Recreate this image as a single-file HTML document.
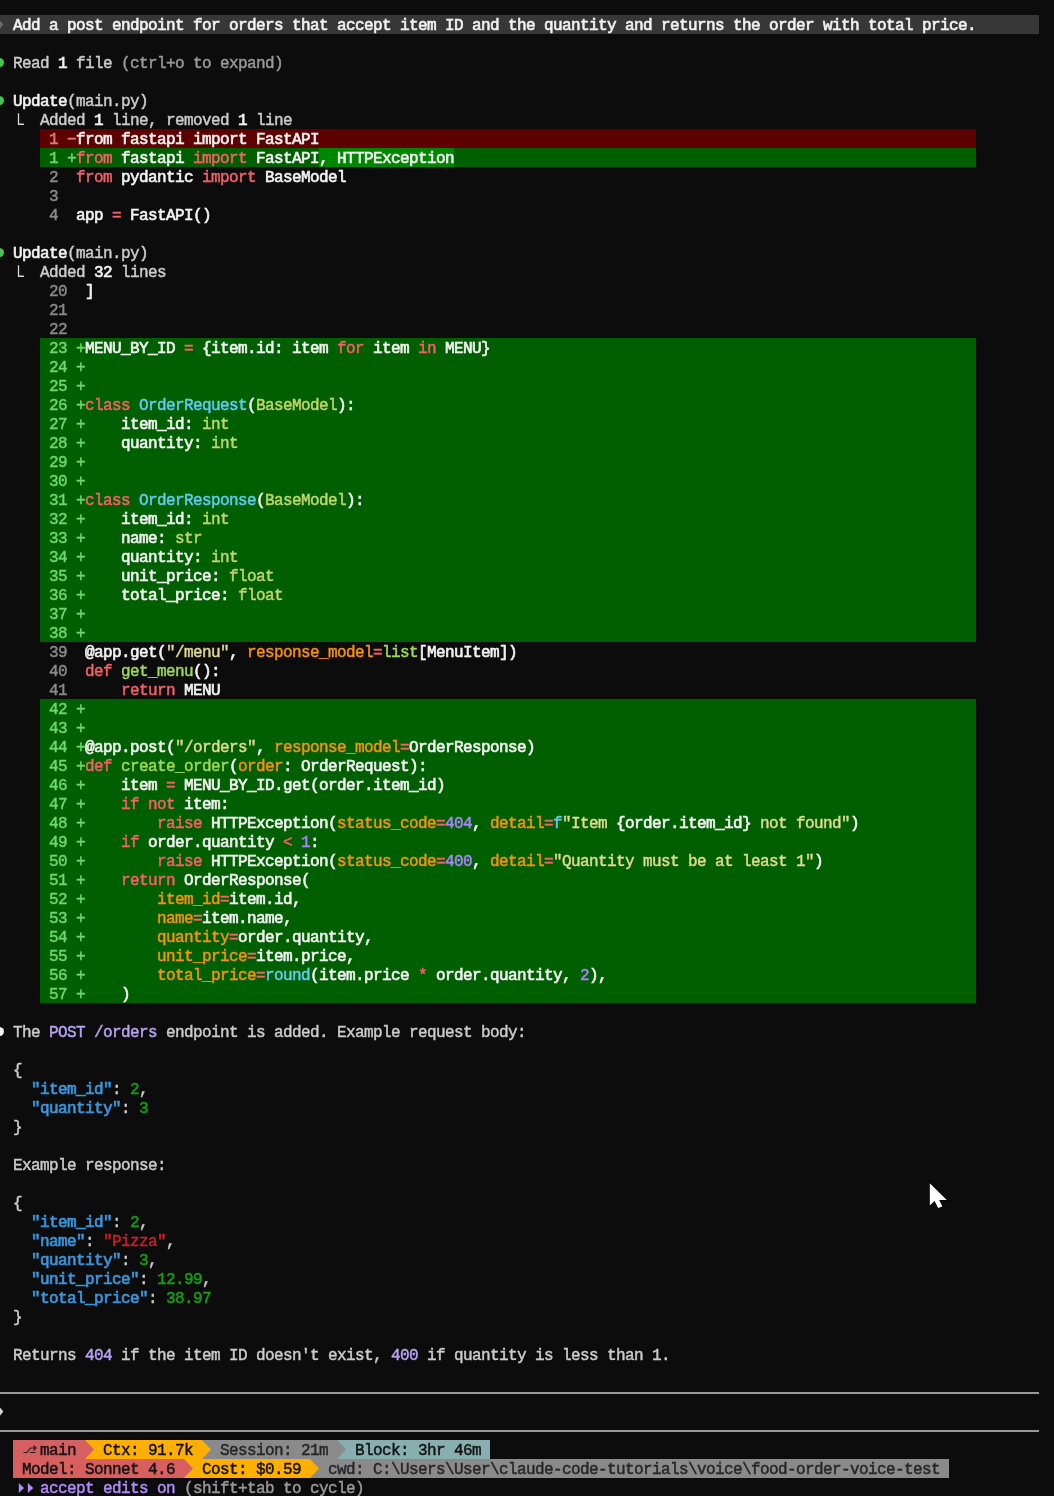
<!DOCTYPE html><html><head><meta charset="utf-8"><title>terminal</title><style>

html,body{margin:0;padding:0;background:#0c0c0c;}
body{width:1054px;height:1496px;position:relative;overflow:hidden;font-family:"Liberation Mono",monospace;font-size:16px;letter-spacing:-0.6016px;color:#cccccc;-webkit-text-stroke:0.45px;}
.a{position:absolute;display:block}
.r{position:absolute;left:-5px;height:19px;line-height:19px;padding-top:2px;will-change:transform;white-space:pre;font-kerning:none;font-variant-ligatures:none}
.b{position:absolute;height:19px}
.w{color:#f2f2f2;-webkit-text-stroke:0.65px}
.hw{color:#f2f2f2;-webkit-text-stroke:0.65px}
.g{color:#999999}
.ln{color:#8a8a8a}
.lg{color:#6bd86b}
.lr{color:#e07a7a}
.k{color:#f8606a}
.c{color:#5fcdf5}
.gr{color:#c0d66c}
.fn{color:#a0d85a}
.s{color:#e0da92}
.o{color:#f8930f}
.p{color:#ae81ff}
.ic{color:#b8a4f4}
.jk{color:#3a96dd;-webkit-text-stroke:0.7px}
.jn{color:#13a10e}
.js{color:#d01f2a}
.sb{color:#121212}
.sb2{color:#262626}
.ae{color:#b18cfa}

</style></head><body>
<div class="b" style="left:0px;top:15px;width:1039px;background:#373737"></div>
<div class="b" style="left:40px;top:129px;width:936px;background:#5f0000"></div>
<div class="b" style="left:40px;top:148px;width:936px;background:#005f00"></div>
<div class="b" style="left:319px;top:148px;width:135px;background:#008700"></div>
<div class="b" style="left:40px;top:338px;width:936px;background:#005f00"></div>
<div class="b" style="left:40px;top:357px;width:936px;background:#005f00"></div>
<div class="b" style="left:40px;top:376px;width:936px;background:#005f00"></div>
<div class="b" style="left:40px;top:395px;width:936px;background:#005f00"></div>
<div class="b" style="left:40px;top:414px;width:936px;background:#005f00"></div>
<div class="b" style="left:40px;top:433px;width:936px;background:#005f00"></div>
<div class="b" style="left:40px;top:452px;width:936px;background:#005f00"></div>
<div class="b" style="left:40px;top:471px;width:936px;background:#005f00"></div>
<div class="b" style="left:40px;top:490px;width:936px;background:#005f00"></div>
<div class="b" style="left:40px;top:509px;width:936px;background:#005f00"></div>
<div class="b" style="left:40px;top:528px;width:936px;background:#005f00"></div>
<div class="b" style="left:40px;top:547px;width:936px;background:#005f00"></div>
<div class="b" style="left:40px;top:566px;width:936px;background:#005f00"></div>
<div class="b" style="left:40px;top:585px;width:936px;background:#005f00"></div>
<div class="b" style="left:40px;top:604px;width:936px;background:#005f00"></div>
<div class="b" style="left:40px;top:623px;width:936px;background:#005f00"></div>
<div class="b" style="left:40px;top:699px;width:936px;background:#005f00"></div>
<div class="b" style="left:40px;top:718px;width:936px;background:#005f00"></div>
<div class="b" style="left:40px;top:737px;width:936px;background:#005f00"></div>
<div class="b" style="left:40px;top:756px;width:936px;background:#005f00"></div>
<div class="b" style="left:40px;top:775px;width:936px;background:#005f00"></div>
<div class="b" style="left:40px;top:794px;width:936px;background:#005f00"></div>
<div class="b" style="left:40px;top:813px;width:936px;background:#005f00"></div>
<div class="b" style="left:40px;top:832px;width:936px;background:#005f00"></div>
<div class="b" style="left:40px;top:851px;width:936px;background:#005f00"></div>
<div class="b" style="left:40px;top:870px;width:936px;background:#005f00"></div>
<div class="b" style="left:40px;top:889px;width:936px;background:#005f00"></div>
<div class="b" style="left:40px;top:908px;width:936px;background:#005f00"></div>
<div class="b" style="left:40px;top:927px;width:936px;background:#005f00"></div>
<div class="b" style="left:40px;top:946px;width:936px;background:#005f00"></div>
<div class="b" style="left:40px;top:965px;width:936px;background:#005f00"></div>
<div class="b" style="left:40px;top:984px;width:936px;background:#005f00"></div>
<div class="b" style="left:13px;top:1440px;width:72px;background:#d75f5f"></div>
<div class="b" style="left:85px;top:1440px;width:117px;background:#ffaf00"></div>
<div class="b" style="left:202px;top:1440px;width:135px;background:#8a8a8a"></div>
<div class="b" style="left:337px;top:1440px;width:153px;background:#87afaf"></div>
<div class="b" style="left:13px;top:1459px;width:171px;background:#d75f5f"></div>
<div class="b" style="left:184px;top:1459px;width:126px;background:#ffaf00"></div>
<div class="b" style="left:310px;top:1459px;width:639px;background:#8a8a8a"></div>
<div class="r" style="top:15px">  <span class="hw">Add a post endpoint for orders that accept item ID and the quantity and returns the order with total price.</span></div>
<div class="r" style="top:53px">  Read <span class="w">1</span> file <span class="g">(ctrl+o to expand)</span></div>
<div class="r" style="top:91px">  <span class="w">Update</span>(main.py)</div>
<div class="r" style="top:110px">     Added <span class="w">1</span> line, removed <span class="w">1</span> line</div>
<div class="r" style="top:129px">      <span class="lr">1 −</span><span class="w">from fastapi import FastAPI</span></div>
<div class="r" style="top:148px">      <span class="lg">1 +</span><span class="k">from</span><span class="w"> fastapi </span><span class="k">import</span><span class="w"> FastAPI, HTTPException</span></div>
<div class="r" style="top:167px">      <span class="ln">2</span>  <span class="k">from</span><span class="w"> pydantic </span><span class="k">import</span><span class="w"> BaseModel</span></div>
<div class="r" style="top:186px">      <span class="ln">3</span></div>
<div class="r" style="top:205px">      <span class="ln">4</span>  <span class="w">app </span><span class="k">=</span><span class="w"> FastAPI()</span></div>
<div class="r" style="top:243px">  <span class="w">Update</span>(main.py)</div>
<div class="r" style="top:262px">     Added <span class="w">32</span> lines</div>
<div class="r" style="top:281px">      <span class="ln">20</span>  <span class="w">]</span></div>
<div class="r" style="top:300px">      <span class="ln">21</span></div>
<div class="r" style="top:319px">      <span class="ln">22</span></div>
<div class="r" style="top:338px">      <span class="lg">23 +</span><span class="w">MENU_BY_ID </span><span class="k">=</span><span class="w"> {item.id: item </span><span class="k">for</span><span class="w"> item </span><span class="k">in</span><span class="w"> MENU}</span></div>
<div class="r" style="top:357px">      <span class="lg">24 +</span></div>
<div class="r" style="top:376px">      <span class="lg">25 +</span></div>
<div class="r" style="top:395px">      <span class="lg">26 +</span><span class="k">class</span> <span class="c">OrderRequest</span><span class="w">(</span><span class="gr">BaseModel</span><span class="w">):</span></div>
<div class="r" style="top:414px">      <span class="lg">27 +</span><span class="w">    item_id: </span><span class="gr">int</span></div>
<div class="r" style="top:433px">      <span class="lg">28 +</span><span class="w">    quantity: </span><span class="gr">int</span></div>
<div class="r" style="top:452px">      <span class="lg">29 +</span></div>
<div class="r" style="top:471px">      <span class="lg">30 +</span></div>
<div class="r" style="top:490px">      <span class="lg">31 +</span><span class="k">class</span> <span class="c">OrderResponse</span><span class="w">(</span><span class="gr">BaseModel</span><span class="w">):</span></div>
<div class="r" style="top:509px">      <span class="lg">32 +</span><span class="w">    item_id: </span><span class="gr">int</span></div>
<div class="r" style="top:528px">      <span class="lg">33 +</span><span class="w">    name: </span><span class="gr">str</span></div>
<div class="r" style="top:547px">      <span class="lg">34 +</span><span class="w">    quantity: </span><span class="gr">int</span></div>
<div class="r" style="top:566px">      <span class="lg">35 +</span><span class="w">    unit_price: </span><span class="gr">float</span></div>
<div class="r" style="top:585px">      <span class="lg">36 +</span><span class="w">    total_price: </span><span class="gr">float</span></div>
<div class="r" style="top:604px">      <span class="lg">37 +</span></div>
<div class="r" style="top:623px">      <span class="lg">38 +</span></div>
<div class="r" style="top:642px">      <span class="ln">39</span>  <span class="w">@app.get(</span><span class="s">"/menu"</span><span class="w">, </span><span class="o">response_model</span><span class="k">=</span><span class="fn">list</span><span class="w">[MenuItem])</span></div>
<div class="r" style="top:661px">      <span class="ln">40</span>  <span class="k">def</span> <span class="fn">get_menu</span><span class="w">():</span></div>
<div class="r" style="top:680px">      <span class="ln">41</span>      <span class="k">return</span><span class="w"> MENU</span></div>
<div class="r" style="top:699px">      <span class="lg">42 +</span></div>
<div class="r" style="top:718px">      <span class="lg">43 +</span></div>
<div class="r" style="top:737px">      <span class="lg">44 +</span><span class="w">@app.post(</span><span class="s">"/orders"</span><span class="w">, </span><span class="o">response_model</span><span class="k">=</span><span class="w">OrderResponse)</span></div>
<div class="r" style="top:756px">      <span class="lg">45 +</span><span class="k">def</span> <span class="fn">create_order</span><span class="w">(</span><span class="o">order</span><span class="w">: OrderRequest):</span></div>
<div class="r" style="top:775px">      <span class="lg">46 +</span><span class="w">    item </span><span class="k">=</span><span class="w"> MENU_BY_ID.get(order.item_id)</span></div>
<div class="r" style="top:794px">      <span class="lg">47 +</span>    <span class="k">if</span> <span class="k">not</span><span class="w"> item:</span></div>
<div class="r" style="top:813px">      <span class="lg">48 +</span>        <span class="k">raise</span><span class="w"> HTTPException(</span><span class="o">status_code</span><span class="k">=</span><span class="p">404</span><span class="w">, </span><span class="o">detail</span><span class="k">=</span><span class="c">f</span><span class="s">"Item </span><span class="w">{order.item_id}</span><span class="s"> not found"</span><span class="w">)</span></div>
<div class="r" style="top:832px">      <span class="lg">49 +</span>    <span class="k">if</span><span class="w"> order.quantity </span><span class="k">&lt;</span> <span class="p">1</span><span class="w">:</span></div>
<div class="r" style="top:851px">      <span class="lg">50 +</span>        <span class="k">raise</span><span class="w"> HTTPException(</span><span class="o">status_code</span><span class="k">=</span><span class="p">400</span><span class="w">, </span><span class="o">detail</span><span class="k">=</span><span class="s">"Quantity must be at least 1"</span><span class="w">)</span></div>
<div class="r" style="top:870px">      <span class="lg">51 +</span>    <span class="k">return</span><span class="w"> OrderResponse(</span></div>
<div class="r" style="top:889px">      <span class="lg">52 +</span>        <span class="o">item_id</span><span class="k">=</span><span class="w">item.id,</span></div>
<div class="r" style="top:908px">      <span class="lg">53 +</span>        <span class="o">name</span><span class="k">=</span><span class="w">item.name,</span></div>
<div class="r" style="top:927px">      <span class="lg">54 +</span>        <span class="o">quantity</span><span class="k">=</span><span class="w">order.quantity,</span></div>
<div class="r" style="top:946px">      <span class="lg">55 +</span>        <span class="o">unit_price</span><span class="k">=</span><span class="w">item.price,</span></div>
<div class="r" style="top:965px">      <span class="lg">56 +</span>        <span class="o">total_price</span><span class="k">=</span><span class="c">round</span><span class="w">(item.price </span><span class="k">*</span><span class="w"> order.quantity, </span><span class="p">2</span><span class="w">),</span></div>
<div class="r" style="top:984px">      <span class="lg">57 +</span><span class="w">    )</span></div>
<div class="r" style="top:1022px">  The <span class="ic">POST /orders</span> endpoint is added. Example request body:</div>
<div class="r" style="top:1060px">  {</div>
<div class="r" style="top:1079px">    <span class="jk">"item_id"</span>: <span class="jn">2</span>,</div>
<div class="r" style="top:1098px">    <span class="jk">"quantity"</span>: <span class="jn">3</span></div>
<div class="r" style="top:1117px">  }</div>
<div class="r" style="top:1155px">  Example response:</div>
<div class="r" style="top:1193px">  {</div>
<div class="r" style="top:1212px">    <span class="jk">"item_id"</span>: <span class="jn">2</span>,</div>
<div class="r" style="top:1231px">    <span class="jk">"name"</span>: <span class="js">"Pizza"</span>,</div>
<div class="r" style="top:1250px">    <span class="jk">"quantity"</span>: <span class="jn">3</span>,</div>
<div class="r" style="top:1269px">    <span class="jk">"unit_price"</span>: <span class="jn">12.99</span>,</div>
<div class="r" style="top:1288px">    <span class="jk">"total_price"</span>: <span class="jn">38.97</span></div>
<div class="r" style="top:1307px">  }</div>
<div class="r" style="top:1345px">  Returns <span class="ic">404</span> if the item ID doesn't exist, <span class="ic">400</span> if quantity is less than 1.</div>
<div class="r" style="top:1440px">     <span class="sb">main</span>   <span class="sb">Ctx: 91.7k</span>   <span class="sb2">Session: 21m</span>   <span class="sb">Block: 3hr 46m</span></div>
<div class="r" style="top:1459px">   <span class="sb">Model: Sonnet 4.6</span>   <span class="sb">Cost: $0.59</span>   <span class="sb2">cwd: C:\Users\User\claude-code-tutorials\voice\food-order-voice-test</span></div>
<div class="r" style="top:1478px">     <span class="ae">accept edits on</span> <span class="g">(shift+tab to cycle)</span></div>
<svg class="a" style="left:85px;top:1440px" width="9" height="19" viewBox="0 0 9 19"><path d="M0 0 L9 9.5 L0 19 Z" fill="#d75f5f"/></svg>
<svg class="a" style="left:202px;top:1440px" width="9" height="19" viewBox="0 0 9 19"><path d="M0 0 L9 9.5 L0 19 Z" fill="#ffaf00"/></svg>
<svg class="a" style="left:337px;top:1440px" width="9" height="19" viewBox="0 0 9 19"><path d="M0 0 L9 9.5 L0 19 Z" fill="#8a8a8a"/></svg>
<svg class="a" style="left:184px;top:1459px" width="9" height="19" viewBox="0 0 9 19"><path d="M0 0 L9 9.5 L0 19 Z" fill="#d75f5f"/></svg>
<svg class="a" style="left:310px;top:1459px" width="9" height="19" viewBox="0 0 9 19"><path d="M0 0 L9 9.5 L0 19 Z" fill="#ffaf00"/></svg>
<div class="a" style="left:0;top:1392px;width:1039px;height:2px;background:#9a9a9a"></div>
<div class="a" style="left:0;top:1430px;width:1039px;height:2px;background:#9a9a9a"></div>
<div class="a" style="left:-5.25px;top:57.85px;width:9.5px;height:9.5px;border-radius:50%;background:#4bc24d"></div>
<div class="a" style="left:-5.25px;top:95.85px;width:9.5px;height:9.5px;border-radius:50%;background:#4bc24d"></div>
<div class="a" style="left:-5.25px;top:247.85px;width:9.5px;height:9.5px;border-radius:50%;background:#4bc24d"></div>
<div class="a" style="left:-5.25px;top:1026.85px;width:9.5px;height:9.5px;border-radius:50%;background:#f2f2f2"></div>
<svg class="a" style="left:-5px;top:15px" width="9" height="19" viewBox="0 0 9 19"><path d="M0 5.5 L5 5.5 L8.3 9.55 L5 13.7 L0 13.7 Z" fill="#646b73"/></svg>
<svg class="a" style="left:-5px;top:1402px" width="9" height="19" viewBox="0 0 9 19"><path d="M0 5.5 L5 5.5 L8.3 9.55 L5 13.7 L0 13.7 Z" fill="#d4d4d4"/></svg>
<svg class="a" style="left:13px;top:110px" width="13" height="19" viewBox="0 0 13 19"><path d="M5.5 3.2 L5.5 14.25 L10.9 14.25" fill="none" stroke="#d8d8d8" stroke-width="1.3"/></svg>
<svg class="a" style="left:13px;top:262px" width="13" height="19" viewBox="0 0 13 19"><path d="M5.5 3.2 L5.5 14.25 L10.9 14.25" fill="none" stroke="#d8d8d8" stroke-width="1.3"/></svg>
<svg class="a" style="left:22px;top:1440px" width="18" height="19" viewBox="0 0 18 19"><path d="M1.5 12.5 L5 12.5 L8.5 8 L14 8 M11.5 5.5 L14 8 L11.5 10.5 M8 12.5 L13.5 12.5" fill="none" stroke="#1c1c1c" stroke-width="1.1"/></svg>
<svg class="a" style="left:13px;top:1478px" width="27" height="19" viewBox="0 0 27 19"><path d="M5.8 4.9 L11 10 L5.8 15.1 Z M14.85 4.9 L20.3 10 L14.85 15.1 Z" fill="#b18cfa"/></svg>
<svg class="a" style="left:920px;top:1175px" width="40" height="40" viewBox="920 1175 40 40"><path d="M929.8 1183.3 L929.8 1205.6 L934.5 1201 L938.1 1208 L942.4 1206.4 L939.2 1200 L946.8 1200 Z" fill="#ffffff" stroke="#000" stroke-width="1.6" stroke-linejoin="miter" style="paint-order:stroke"/></svg>
</body></html>
